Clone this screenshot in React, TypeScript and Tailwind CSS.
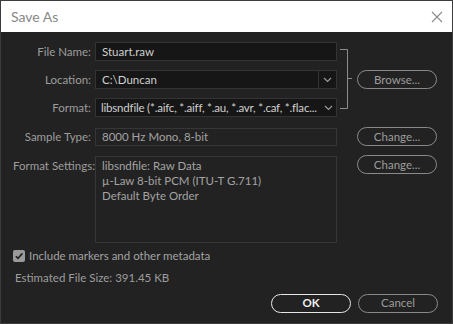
import React from "react";

const font = { fontFamily: "'Lato', 'Open Sans', sans-serif" };

function Chevron() {
  return (
    <svg width="9" height="6" viewBox="0 0 9 6" className="text-[#9a9a9a]">
      <path d="M1 1 L4.5 4.5 L8 1" fill="none" stroke="currentColor" strokeWidth="1.2" />
    </svg>
  );
}

function PillButton({ children, primary = false }: { children: React.ReactNode; primary?: boolean }) {
  return (
    <button
      className={
        "w-[80px] h-[19px] rounded-full border-[1.5px] text-[11.5px] leading-none flex items-center justify-center " +
        (primary ? "border-[#e6e6e6] text-[#f0f0f0] font-bold" : "border-[#8a8a8a] text-[#9c9c9c]")
      }
    >
      {children}
    </button>
  );
}

function Label({ children }: { children: React.ReactNode }) {
  return (
    <div className="w-[83px] mr-[4px] text-right text-[11.5px] text-[#9d9d9d] whitespace-nowrap shrink-0">{children}</div>
  );
}

export default function App() {
  return (
    <div className="w-[453px] h-[324px] bg-[#222222] border border-[#3c3c3c] flex flex-col overflow-hidden" style={font}>
      {/* title bar */}
      <div className="h-[31px] bg-white flex items-center justify-between pl-[10px] pr-[9px] shrink-0">
        <span className="text-[14px] text-[#888888]">Save As</span>
        <svg width="12" height="12" viewBox="0 0 12 12">
          <path d="M1 1 L11 11 M11 1 L1 11" stroke="#8a8a8a" strokeWidth="1.1" />
        </svg>
      </div>

      <div className="flex flex-col pl-[7px] pt-[10px]">
        {/* name / location / format + browse */}
        <div className="flex">
          <div className="flex flex-col gap-[9px]">
            <div className="flex items-center">
              <Label>File Name:</Label>
              <div className="w-[242px] h-[19px] bg-[#161616] border border-[#333333] flex items-center px-[6px] text-[11.5px] text-[#cfcfcf]">
                Stuart.raw
              </div>
            </div>
            <div className="flex items-center">
              <Label>Location:</Label>
              <div className="w-[242px] h-[19px] bg-[#161616] border border-[#333333] flex items-center text-[11.5px] text-[#cfcfcf]">
                <span className="flex-1 px-[6px]">C:\Duncan</span>
                <div className="w-[18px] h-full border-l border-[#333333] flex items-center justify-center">
                  <Chevron />
                </div>
              </div>
            </div>
            <div className="flex items-center">
              <Label>Format:</Label>
              <div className="w-[242px] h-[19px] bg-[#161616] border border-[#333333] flex items-center text-[11.5px] text-[#cfcfcf]">
                <span className="flex-1 pl-[5px] whitespace-nowrap tracking-[-0.2px]">
                  libsndfile (*.aifc, *.aiff, *.au, *.avr, *.caf, *.flac...
                </span>
                <div className="w-[16px] h-full flex items-center justify-center shrink-0">
                  <Chevron />
                </div>
              </div>
            </div>
          </div>
          <svg width="16" height="75" viewBox="0 0 16 75" className="shrink-0">
            <path d="M3 7.5 H10.5 V66.5 H3 M10.5 36.5 H15" fill="none" stroke="#8c8c8c" strokeWidth="1" />
          </svg>
          <div className="flex items-center ml-[4px]">
            <PillButton>Browse...</PillButton>
          </div>
        </div>

        {/* sample type */}
        <div className="flex items-center mt-[10px]">
          <Label>Sample Type:</Label>
          <div className="w-[242px] h-[18px] border border-[#363636] flex items-center px-[6px] text-[11.5px] text-[#a3a3a3]">
            8000 Hz Mono, 8-bit
          </div>
          <div className="ml-[20px]">
            <PillButton>Change...</PillButton>
          </div>
        </div>

        {/* format settings */}
        <div className="flex items-start mt-[10px]">
          <div className="w-[87px] pl-[5px] pt-[1px] text-[11.5px] text-[#9d9d9d] whitespace-nowrap shrink-0">
            Format Settings:
          </div>
          <div className="w-[242px] h-[87px] border border-[#363636] px-[6px] pt-[1px] text-[11.5px] leading-[15px] text-[#a3a3a3]">
            <div>libsndfile: Raw Data</div>
            <div>µ-Law 8-bit PCM (ITU-T G.711)</div>
            <div>Default Byte Order</div>
          </div>
          <div className="ml-[20px] -mt-[1px]">
            <PillButton>Change...</PillButton>
          </div>
        </div>

        {/* checkbox */}
        <div className="flex items-center mt-[4px] pl-[5px] gap-[4px]">
          <div className="w-[12px] h-[12px] rounded-[2px] bg-[#9a9a9a] flex items-center justify-center">
            <svg width="10" height="10" viewBox="0 0 10 10">
              <path d="M1.8 5.2 L4 7.4 L8.4 2.4" fill="none" stroke="#232323" strokeWidth="1.6" />
            </svg>
          </div>
          <span className="text-[11.5px] text-[#a3a3a3]">Include markers and other metadata</span>
        </div>

        <div className="mt-[5px] pl-[7px] text-[11.5px] text-[#9d9d9d]">Estimated File Size: 391.45 KB</div>

        {/* buttons */}
        <div className="flex justify-end gap-[7px] mt-[7px] pr-[14px]">
          <PillButton primary>OK</PillButton>
          <PillButton>Cancel</PillButton>
        </div>
      </div>
    </div>
  );
}
